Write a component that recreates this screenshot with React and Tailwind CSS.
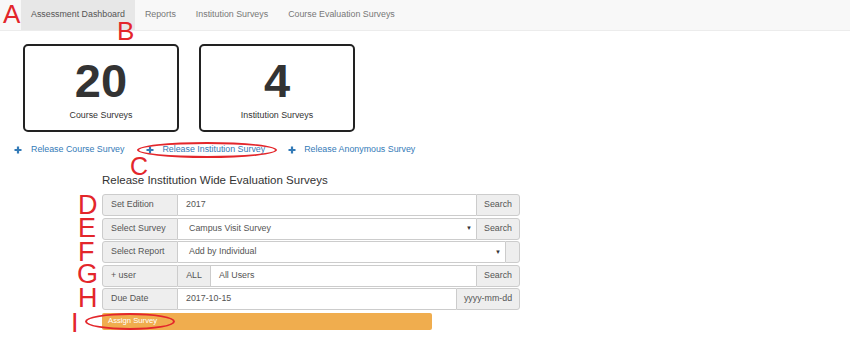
import React from "react";

const Plus = () => (
  <svg width="8" height="8" viewBox="0 0 8 8" className="shrink-0">
    <path d="M4 0.5V7.5M0.5 4H7.5" stroke="#337ab7" strokeWidth="2.2" />
  </svg>
);

const Red = ({ children, className }) => (
  <div className={"absolute text-[#e3262b] " + className}>{children}</div>
);

const Addon = ({ children, className = "" }) => (
  <div className={"flex items-center justify-center bg-[#eeeeee] border border-[#cccccc] text-[#555] " + className}>
    {children}
  </div>
);

const Label = ({ children }) => (
  <div className="flex items-center w-[76px] shrink-0 pl-[8px] bg-[#eeeeee] border border-[#cccccc] rounded-l-[3px] text-[#555]">
    {children}
  </div>
);

export default function App() {
  return (
    <div className="relative w-[850px] h-[339px] bg-white overflow-hidden text-[8.85px]" style={{ fontFamily: '"Liberation Sans", Arial, sans-serif' }}>
      {/* navbar */}
      <div className="h-[31px] bg-[#f8f8f8] border-b border-[#ececec] flex pl-[21px]">
        <div className="px-[10px] h-[30px] flex items-center bg-[#e7e7e7] text-[#555]">Assessment Dashboard</div>
        <div className="px-[10px] h-[30px] flex items-center text-[#777]">Reports</div>
        <div className="px-[10px] h-[30px] flex items-center text-[#777]">Institution Surveys</div>
        <div className="px-[10px] h-[30px] flex items-center text-[#777]">Course Evaluation Surveys</div>
      </div>

      {/* cards */}
      <div className="flex gap-[20px] pl-[23px] mt-[13px]">
        {[["20", "Course Surveys"], ["4", "Institution Surveys"]].map(([n, l]) => (
          <div key={l} className="w-[156px] h-[88px] border-2 border-[#222] rounded-[5px] flex flex-col items-center pt-[11px]">
            <div className="text-[47px] leading-none font-bold text-[#333]">{n}</div>
            <div className="mt-[5px] leading-[12px] text-[#333]">{l}</div>
          </div>
        ))}
      </div>

      {/* links */}
      <div className="flex items-center pl-[14px] mt-[12px] h-[12px] text-[#337ab7]">
        <Plus />
        <span className="ml-[9px]">Release Course Survey</span>
        <span className="ml-[22px] flex"><Plus /></span>
        <span className="ml-[8px]">Release Institution Survey</span>
        <span className="ml-[23px] flex"><Plus /></span>
        <span className="ml-[8px]">Release Anonymous Survey</span>
      </div>

      {/* heading */}
      <div className="ml-[102px] mt-[17px] text-[11.5px] leading-[14px] text-[#333]">
        Release Institution Wide Evaluation Surveys
      </div>

      {/* form */}
      <div className="ml-[102px] mt-[7px] w-[418px] flex flex-col gap-[1.5px]">
        <div className="flex h-[22px]">
          <Label>Set Edition</Label>
          <div className="flex-1 flex items-center pl-[8px] border-y border-[#cccccc] text-[#555]">2017</div>
          <Addon className="w-[44px] rounded-r-[3px]">Search</Addon>
        </div>
        <div className="flex h-[22px]">
          <Label>Select Survey</Label>
          <div className="flex-1 flex items-center justify-between pl-[11px] pr-[4px] border-y border-[#cccccc] text-[#555]">
            <span>Campus Visit Survey</span>
            <span className="text-[6px] text-[#333]">▼</span>
          </div>
          <Addon className="w-[44px] rounded-r-[3px]">Search</Addon>
        </div>
        <div className="flex h-[22px]">
          <Label>Select Report</Label>
          <div className="flex-1 flex items-center justify-between pl-[11px] pr-[4px] border-y border-[#cccccc] text-[#555]">
            <span>Add by Individual</span>
            <span className="text-[6px] text-[#333]">▼</span>
          </div>
          <Addon className="w-[15px] rounded-r-[3px]"></Addon>
        </div>
        <div className="flex h-[22px]">
          <Label>+ user</Label>
          <Addon className="w-[33px] border-l-0">ALL</Addon>
          <div className="flex-1 flex items-center pl-[8px] border-y border-[#cccccc] text-[#555]">All Users</div>
          <Addon className="w-[44px] rounded-r-[3px]">Search</Addon>
        </div>
        <div className="flex h-[22px]">
          <Label>Due Date</Label>
          <div className="flex-1 flex items-center pl-[8px] border-y border-[#cccccc] text-[#555]">2017-10-15</div>
          <Addon className="w-[64px] rounded-r-[3px]">yyyy-mm-dd</Addon>
        </div>
        <div className="mt-[1px] w-[330px] h-[17px] bg-[#f0ad4e] rounded-[2px] flex items-center pl-[6px] text-[7.7px] text-white">
          Assign Survey
        </div>
      </div>

      {/* annotations */}
      <Red className="left-[3px] top-[5px] text-[26px] leading-[19px]">A</Red>
      <Red className="left-[117px] top-[22px] text-[26px] leading-[19px]">B</Red>
      <Red className="left-[130px] top-[157px] text-[25px] leading-[18px]">C</Red>
      <Red className="left-[78px] top-[195px] text-[27px] leading-[20px]">D</Red>
      <Red className="left-[78px] top-[218px] text-[27px] leading-[20px]">E</Red>
      <Red className="left-[78px] top-[242px] text-[27px] leading-[20px]">F</Red>
      <Red className="left-[77px] top-[264px] text-[27px] leading-[20px]">G</Red>
      <Red className="left-[78px] top-[288px] text-[27px] leading-[20px]">H</Red>
      <Red className="left-[71px] top-[313px] text-[27px] leading-[20px]">I</Red>
      <div className="absolute left-[137px] top-[142px] w-[140px] h-[16px] border-2 border-[#e3262b] rounded-[50%]" />
      <div className="absolute left-[85px] top-[313px] w-[90px] h-[17px] border-2 border-[#e3262b] rounded-[50%]" />
    </div>
  );
}
